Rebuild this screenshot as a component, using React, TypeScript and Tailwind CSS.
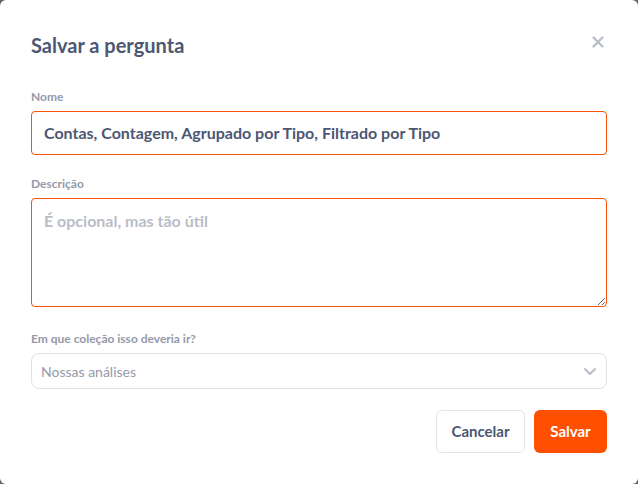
import React from "react";

export default function App() {
  return (
    <div className="w-full h-[484px] bg-[#5f6368]" style={{ fontFamily: "Lato, 'Noto Sans', sans-serif" }}>
      <div className="w-full h-full bg-white rounded-[6px] flex flex-col px-[31px] pt-[31px]">
        <div className="flex items-start justify-between">
          <h1 className="text-[20px] leading-[28px] font-bold text-[#4c5773]">Salvar a pergunta</h1>
          <svg width="12" height="12" viewBox="0 0 12 12" className="mt-[5px] mr-[3px]">
            <path d="M1.5 1.5 L10.5 10.5 M10.5 1.5 L1.5 10.5" stroke="#b9bdc7" strokeWidth="2.4" strokeLinecap="round" />
          </svg>
        </div>

        <label className="mt-[30px] text-[12px] leading-[16px] font-bold text-[#949aab]">Nome</label>
        <div className="mt-[6px] h-[44px] border border-[#fa520a] rounded-[4px] flex items-center px-[12px]">
          <span className="text-[16px] font-bold text-[#4c5773]">Contas, Contagem, Agrupado por Tipo, Filtrado por Tipo</span>
        </div>

        <label className="mt-[21px] text-[12px] leading-[16px] font-bold text-[#949aab]">Descrição</label>
        <textarea
          className="mt-[6px] h-[109px] border border-[#fa520a] rounded-[4px] px-[12px] py-[10px] text-[16px] font-bold text-[#4c5773] placeholder:text-[#b9bdc7] outline-none"
          placeholder="É opcional, mas tão útil"
          style={{ fontFamily: "Lato, 'Noto Sans', sans-serif" }}
        />

        <label className="mt-[24px] text-[12px] leading-[16px] font-bold text-[#949aab]">Em que coleção isso deveria ir?</label>
        <div className="mt-[6px] h-[36px] border border-[#dfe1e5] rounded-[8px] flex items-center justify-between pl-[9px] pr-[9px]">
          <span className="text-[14px] text-[#949aab]">Nossas análises</span>
          <svg width="14" height="14" viewBox="0 0 14 14">
            <path d="M2 5 L7 10 L12 5" stroke="#b9bdc7" strokeWidth="2" fill="none" strokeLinecap="round" strokeLinejoin="round" />
          </svg>
        </div>

        <div className="mt-[21px] flex justify-end gap-[9px]">
          <button className="h-[43px] w-[89px] border border-[#e3e5e8] rounded-[6px] bg-white text-[15px] font-bold text-[#4c5773]">Cancelar</button>
          <button className="h-[43px] w-[73px] rounded-[6px] bg-[#ff5000] text-[15px] font-bold text-white">Salvar</button>
        </div>
      </div>
    </div>
  );
}
